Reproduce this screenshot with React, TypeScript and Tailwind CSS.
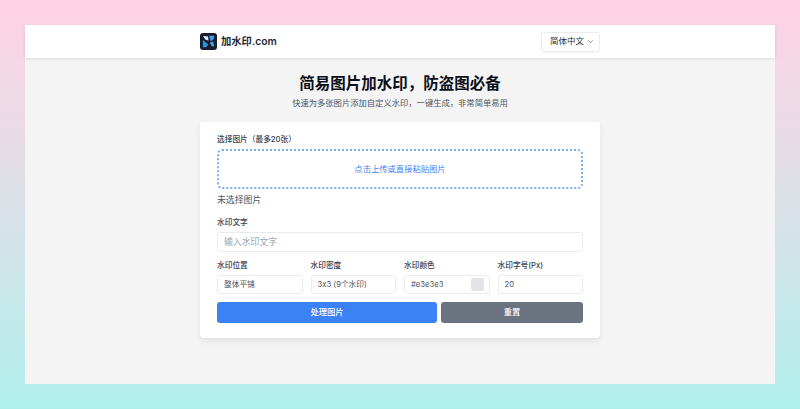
const fields = [
  { label: '水印位置', value: '整体平铺' },
  { label: '水印密度', value: '3x3 (9个水印)' },
];

function Logo() {
  return (
    <svg width="17" height="17" viewBox="0 0 17 17" className="shrink-0">
      <rect width="17" height="17" rx="3" fill="#171d2b" />
      <path d="M3 3 L8 3.4 L8.6 7.6 L5.5 6.8 Z" fill="#d9f0ff" />
      <path d="M9 2.8 L14 2.8 C14.4 5.5 13 8 10.6 8 Z" fill="#37a5ee" />
      <path d="M2.8 7 L8.4 11.5 L6.2 14.2 L2.8 14.2 Z" fill="#2b93e4" />
      <path d="M10 9.2 L13.2 8.6 L14.2 13.6 L11.4 13 Z" fill="#37a5ee" />
    </svg>
  );
}

export default function App() {
  return (
    <div className="w-full h-[409px] overflow-hidden p-[25px] bg-gradient-to-b from-[#ffd1e3] to-[#aeefec] font-['Inter','Noto_Sans_CJK_SC',sans-serif] [font-feature-settings:'calt'_0]">
      <div className="h-[359px] bg-[#f4f4f5] flex flex-col items-center">
        {/* header */}
        <div className="w-full h-[33px] shrink-0 bg-white shadow-[0_1px_3px_rgba(0,0,0,0.1)] flex justify-center">
          <div className="w-[400px] flex items-center justify-between">
            <div className="flex items-center gap-[4px]">
              <Logo />
              <span className="text-[10.3px] font-semibold text-[#1f2937]">加水印.com</span>
            </div>
            <div className="w-[59px] h-[20px] flex items-center justify-between pl-[8px] pr-[5px] bg-white border border-[#e9ebef] rounded-[3px] shadow-[0_1px_1px_rgba(0,0,0,0.04)]">
              <span className="text-[8.5px] text-[#1f2937]">简体中文</span>
              <svg width="7" height="7" viewBox="0 0 7 7" fill="none" stroke="#6b7280" strokeWidth="0.9">
                <path d="M1.2 2.4 L3.5 4.7 L5.8 2.4" />
              </svg>
            </div>
          </div>
        </div>

        {/* title */}
        <h1 className="mt-[16px] text-[15.5px] leading-[20px] font-bold text-[#0b0f19]">简易图片加水印，防盗图必备</h1>
        <p className="mt-[3px] text-[8.3px] leading-[12px] text-[#4b5563]">快速为多张图片添加自定义水印，一键生成，非常简单易用</p>

        {/* card */}
        <div className="mt-[13px] w-[400px] h-[216px] bg-white rounded-[4px] shadow-[0_3px_6px_rgba(0,0,0,0.08)] px-[17px] pt-[13px]">
          <div className="text-[7.7px] leading-[10px] font-medium text-[#374151]">选择图片（最多20张）</div>
          <div className="mt-[4px] h-[40px] border-2 border-dotted border-[#7fabf9] rounded-[5px] flex items-center justify-center">
            <span className="text-[8.3px] text-[#3b82f6]">点击上传或直接粘贴图片</span>
          </div>
          <div className="mt-[5px] text-[8.9px] leading-[12px] text-[#4b5563]">未选择图片</div>

          <div className="mt-[12px] text-[7.7px] leading-[10px] font-medium text-[#374151]">水印文字</div>
          <div className="mt-[4px] h-[20px] border border-[#e9ebef] rounded-[3px] flex items-center px-[6px]">
            <span className="text-[8.9px] text-[#9ca3af]">输入水印文字</span>
          </div>

          <div className="mt-[9px] grid grid-cols-4 gap-x-[8px]">
            {fields.map((f) => (
              <div key={f.label}>
                <div className="text-[7.7px] leading-[10px] font-medium text-[#374151]">{f.label}</div>
                <div className="mt-[4px] h-[19px] border border-[#e9ebef] rounded-[3px] flex items-center px-[6px]">
                  <span className="text-[7.7px] text-[#4b5563]">{f.value}</span>
                </div>
              </div>
            ))}
            <div>
              <div className="text-[7.7px] leading-[10px] font-medium text-[#374151]">水印颜色</div>
              <div className="mt-[4px] h-[19px] border border-[#e9ebef] rounded-[3px] flex items-center justify-between pl-[6px] pr-[5px]">
                <span className="text-[7.7px] text-[#4b5563]">#e3e3e3</span>
                <div className="w-[13px] h-[13px] rounded-[2px] bg-[#e3e3e8]" />
              </div>
            </div>
            <div>
              <div className="text-[7.7px] leading-[10px] font-medium text-[#374151]">水印字号(Px)</div>
              <div className="mt-[4px] h-[19px] border border-[#e9ebef] rounded-[3px] flex items-center px-[6px]">
                <span className="text-[7.7px] text-[#4b5563]">20</span>
              </div>
            </div>
          </div>

          <div className="mt-[8px] flex gap-[4px]">
            <button className="w-[220px] h-[21px] bg-[#3b82f6] rounded-[3px] text-[8.3px] font-medium text-white">处理图片</button>
            <button className="flex-1 h-[21px] bg-[#6b7280] rounded-[3px] text-[8.3px] font-medium text-white">重置</button>
          </div>
        </div>
      </div>
    </div>
  );
}
